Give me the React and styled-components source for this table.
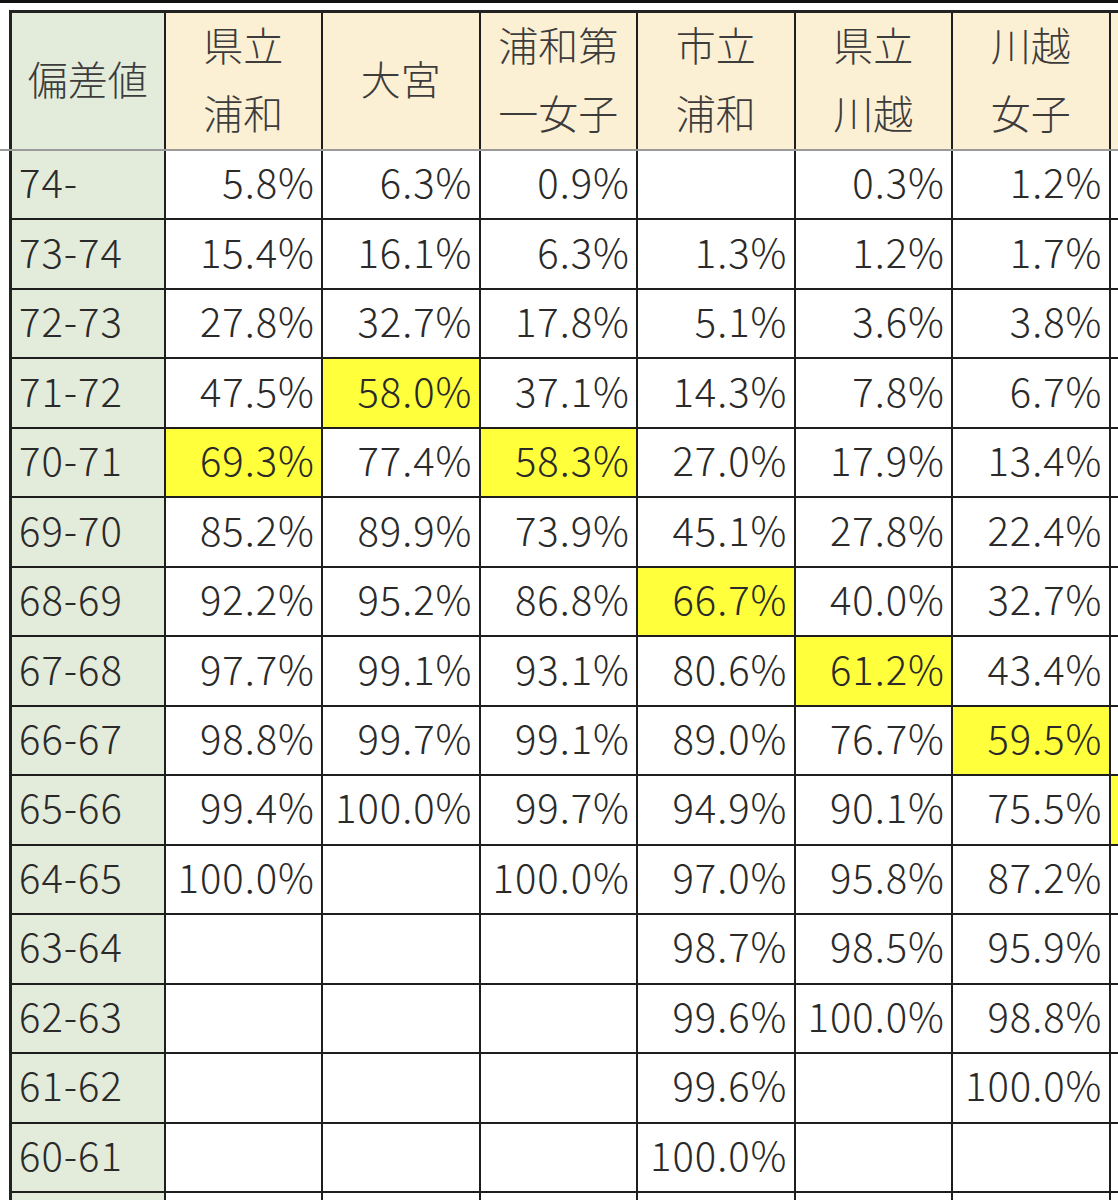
import React from "react";
import styled, { createGlobalStyle } from "styled-components";

const COLS = "153.5px repeat(7, 157.5px)";
const ROW_H = 69.47;

const schools = [
  ["県立", "浦和"],
  ["大宮"],
  ["浦和第", "一女子"],
  ["市立", "浦和"],
  ["県立", "川越"],
  ["川越", "女子"],
  [""],
];

// "*" marks a highlighted cell
const rows = [
  ["74-", "5.8%", "6.3%", "0.9%", "", "0.3%", "1.2%", ""],
  ["73-74", "15.4%", "16.1%", "6.3%", "1.3%", "1.2%", "1.7%", ""],
  ["72-73", "27.8%", "32.7%", "17.8%", "5.1%", "3.6%", "3.8%", ""],
  ["71-72", "47.5%", "*58.0%", "37.1%", "14.3%", "7.8%", "6.7%", ""],
  ["70-71", "*69.3%", "77.4%", "*58.3%", "27.0%", "17.9%", "13.4%", ""],
  ["69-70", "85.2%", "89.9%", "73.9%", "45.1%", "27.8%", "22.4%", ""],
  ["68-69", "92.2%", "95.2%", "86.8%", "*66.7%", "40.0%", "32.7%", ""],
  ["67-68", "97.7%", "99.1%", "93.1%", "80.6%", "*61.2%", "43.4%", ""],
  ["66-67", "98.8%", "99.7%", "99.1%", "89.0%", "76.7%", "*59.5%", ""],
  ["65-66", "99.4%", "100.0%", "99.7%", "94.9%", "90.1%", "75.5%", "*"],
  ["64-65", "100.0%", "", "100.0%", "97.0%", "95.8%", "87.2%", ""],
  ["63-64", "", "", "", "98.7%", "98.5%", "95.9%", ""],
  ["62-63", "", "", "", "99.6%", "100.0%", "98.8%", ""],
  ["61-62", "", "", "", "99.6%", "", "100.0%", ""],
  ["60-61", "", "", "", "100.0%", "", "", ""],
  ["", "", "", "", "", "", "", ""],
];

export default function App() {
  return (
    <>
      <GlobalStyle />
      <Screen>
        <HeaderBand>
          <HeaderRow>
            <HeadCell $tone="label">
              <span>偏差値</span>
            </HeadCell>
            {schools.map((lines, i) => (
              <HeadCell key={i} $tone="head">
                {lines.map((l, j) => (
                  <span key={j}>{l}</span>
                ))}
              </HeadCell>
            ))}
          </HeaderRow>
        </HeaderBand>
        <Body>
          {rows.map((r, i) => (
            <Row key={i}>
              <Cell $tone="label" $align="left">
                {r[0]}
              </Cell>
              {r.slice(1).map((v, j) => {
                const marked = v.startsWith("*");
                return (
                  <Cell key={j} $tone={marked ? "yellow" : "plain"} $align="right">
                    {marked ? v.slice(1) : v}
                  </Cell>
                );
              })}
            </Row>
          ))}
        </Body>
      </Screen>
    </>
  );
}

// ===============================================================================================================================
//                                              STYLES
// ===============================================================================================================================

const GlobalStyle = createGlobalStyle`
  html, body {
    margin: 0;
    padding: 0;
    background: #fff;
  }
  body {
    font-family: "Noto Sans CJK JP", "Noto Sans", sans-serif;
    font-weight: 300;
    color: #2a2a2a;
  }
`;

const tones = {
  head: "#fcf0d4",
  label: "#e3ebda",
  yellow: "#ffff3c",
  plain: "#ffffff",
};

const Screen = styled.div`
  width: 1118px;
  height: 1200px;
  overflow: hidden;
  border-top: 3px solid #111;
  box-sizing: border-box;
`;

const HeaderBand = styled.div`
  margin-top: 7px;
  padding-left: 9px;
  border-bottom: 2px solid #9a9a9a;
`;

const HeaderRow = styled.div`
  display: grid;
  grid-template-columns: ${COLS};
  border-top: 3px solid #222;
  border-left: 3px solid #222;
`;

const HeadCell = styled.div`
  box-sizing: border-box;
  height: 136px;
  padding-bottom: 6px;
  display: flex;
  flex-direction: column;
  align-items: center;
  justify-content: center;
  background: ${(p) => tones[p.$tone]};
  border-right: 2px solid #1e1e1e;
  font-size: 40px;
  line-height: 68px;
  color: #3c3c3c;
`;

const Body = styled.div`
  padding-left: 9px;
`;

const Row = styled.div`
  display: grid;
  grid-template-columns: ${COLS};
  height: ${ROW_H}px;
  border-left: 3px solid #222;
`;

const Cell = styled.div`
  box-sizing: border-box;
  display: flex;
  align-items: center;
  justify-content: ${(p) => (p.$align === "left" ? "flex-start" : "flex-end")};
  padding: 0 6px 7px 7px;
  background: ${(p) => tones[p.$tone]};
  border-right: 2px solid #1e1e1e;
  border-bottom: 2px solid #1e1e1e;
  font-size: 40px;
  letter-spacing: 1px;
  white-space: nowrap;
  overflow: hidden;
`;
